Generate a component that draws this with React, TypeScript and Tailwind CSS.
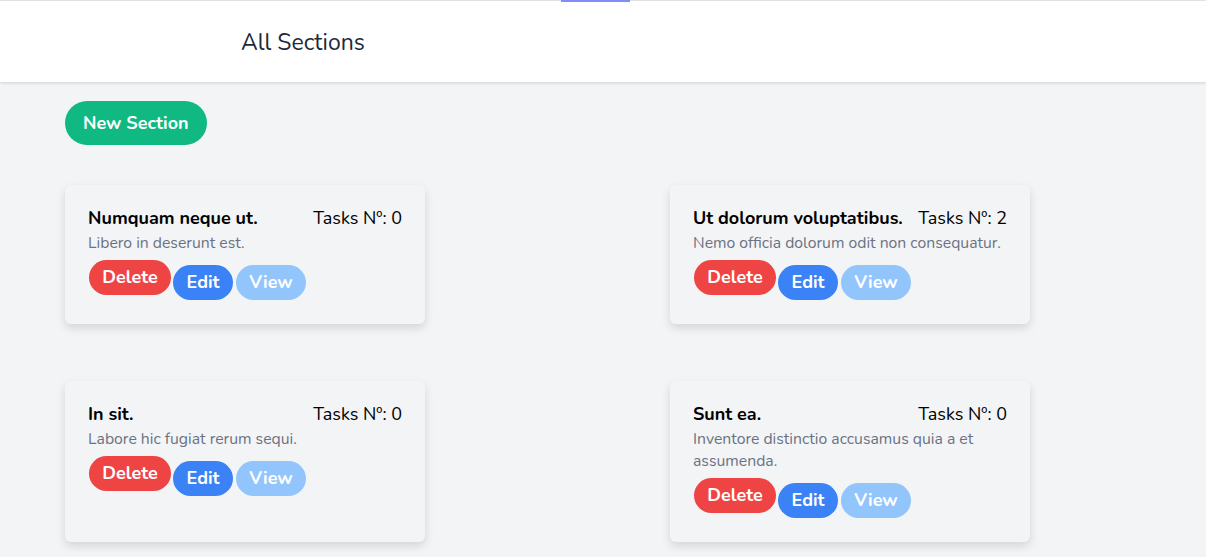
import React from 'react';

interface Section {
  title: string;
  description: string;
  tasks: number;
}

const sections: Section[] = [
  { title: 'Numquam neque ut.', description: 'Libero in deserunt est.', tasks: 0 },
  { title: 'Ut dolorum voluptatibus.', description: 'Nemo officia dolorum odit non consequatur.', tasks: 2 },
  { title: 'In sit.', description: 'Labore hic fugiat rerum sequi.', tasks: 0 },
  { title: 'Sunt ea.', description: 'Inventore distinctio accusamus quia a et assumenda.', tasks: 0 },
];

function SectionCard({ section }: { section: Section }) {
  return (
    <div className="rounded-md bg-[#f3f4f6] shadow-[0_4px_10px_rgba(0,0,0,0.13)] pl-[23px] pr-[23px] pt-5 pb-6">
      <div className="flex items-center justify-between">
        <h3 className="text-lg font-bold text-black leading-[27px]">{section.title}</h3>
        <span className="text-lg text-black leading-[27px]">Tasks Nº: {section.tasks}</span>
      </div>
      <p className="text-[15.75px] text-gray-500 leading-[22px]">{section.description}</p>
      <div className="flex items-start mt-[6px]">
        <button className="rounded-full bg-[#ef4444] text-white font-bold text-lg leading-[35px] h-[35px] w-[82px] ml-px">
          Delete
        </button>
        <button className="rounded-full bg-[#3b82f6] text-white font-bold text-lg leading-[35px] h-[35px] w-[60px] mt-[5px] ml-[2px]">
          Edit
        </button>
        <button className="rounded-full bg-[#93c5fd] text-white font-bold text-lg leading-[35px] h-[35px] w-[70px] mt-[5px] ml-[3px]">
          View
        </button>
      </div>
    </div>
  );
}

export default function App() {
  return (
    <div className="min-h-[557px] bg-[#f3f4f6] font-['Nunito','Lato','Noto_Sans',sans-serif]">
      <div className="h-px bg-gray-200 flex justify-center">
        <div className="w-[69px] h-[2px] bg-[#818cf8] -ml-[15px]" />
      </div>
      <header className="h-[81px] bg-white shadow-[0_1px_3px_rgba(0,0,0,0.15)] flex items-center pl-[241px]">
        <h1 className="text-[23px] text-gray-800 font-normal mt-[4px]">All Sections</h1>
      </header>
      <main className="px-[65px] pt-[19px]">
        <button className="rounded-full bg-[#10b981] text-white font-bold text-lg h-[44px] px-[18px]">
          New Section
        </button>
        <div className="grid grid-cols-[360px_360px] gap-x-[245px] gap-y-[57px] mt-[40px]">
          {sections.map((s) => (
            <SectionCard key={s.title} section={s} />
          ))}
        </div>
      </main>
    </div>
  );
}
